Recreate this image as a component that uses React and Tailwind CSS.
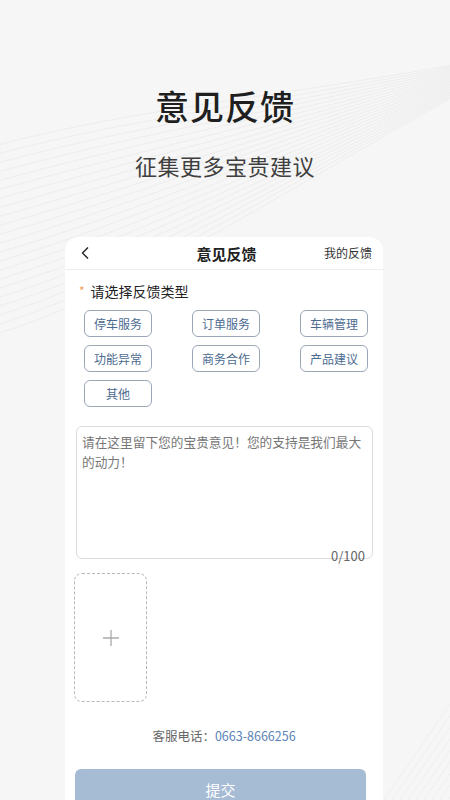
import React from "react";

const types = [
  "停车服务", "订单服务", "车辆管理",
  "功能异常", "商务合作", "产品建议",
  "其他",
];

function Waves() {
  const lines = [];
  for (let i = 0; i < 22; i++) {
    const y0 = 150 + i * 9;
    const y1 = 140 + i * 5;
    const y2 = 62 + i * 1.2;
    lines.push(
      <path
        key={"a" + i}
        d={`M-20 ${y0} C 120 ${y0 - 40}, 260 ${y1 - 40}, 470 ${y2}`}
        fill="none"
        stroke="#e6e6e6"
        strokeWidth="0.6"
      />
    );
  }
  const lines2 = [];
  for (let i = 0; i < 14; i++) {
    const x0 = 370 + i * 8;
    lines2.push(
      <path
        key={"b" + i}
        d={`M${x0} 820 L ${x0 + 90} 690`}
        fill="none"
        stroke="#ebebeb"
        strokeWidth="0.7"
      />
    );
  }
  return (
    <svg className="absolute inset-0" width="450" height="800" viewBox="0 0 450 800">
      {lines}
      {lines2}
    </svg>
  );
}

export default function App() {
  return (
    <div
      className="relative w-[450px] h-[800px] overflow-hidden bg-[#f6f6f6]"
      style={{ fontFamily: '"Noto Sans CJK SC", "Noto Sans", sans-serif' }}
    >
      <Waves />
      <div className="relative flex flex-col">
        <div className="pt-[86px] text-center text-[34px] leading-[40px] font-medium text-[#1f1f1f] tracking-[1px]">
          意见反馈
        </div>
        <div className="mt-[25px] text-center text-[22px] leading-[28px] text-[#3f3f3f] tracking-[0.5px]">
          征集更多宝贵建议
        </div>

        <div className="mt-[58px] ml-[65px] w-[318px] h-[600px] bg-white rounded-t-[14px] flex flex-col">
          <div className="h-[33px] border-b border-[#efefef] grid grid-cols-[1fr_auto_1fr] items-center">
            <div className="pl-[15px]">
              <svg width="10" height="14" viewBox="0 0 10 14">
                <path d="M8 1.5 L2.5 7 L8 12.5" fill="none" stroke="#222" strokeWidth="1.4" />
              </svg>
            </div>
            <div className="pl-[5px] text-[15px] font-bold text-[#222] leading-none">意见反馈</div>
            <div className="text-right pr-[11px] text-[12px] text-[#333] leading-none">我的反馈</div>
          </div>

          <div className="mt-[11px] pl-[14px] flex items-center text-[14px] leading-[20px] text-[#222]">
            <span className="text-[#f0a060] text-[12px] mr-[6px]">*</span>
            <span>请选择反馈类型</span>
          </div>

          <div className="mt-[9px] ml-[19px] grid grid-cols-[68px_68px_68px] gap-x-[40px] gap-y-[8px]">
            {types.map((t) => (
              <div
                key={t}
                className="h-[27px] rounded-[6px] border border-[#9aa7b8] flex items-center justify-center text-[12px] text-[#4d6b91]"
              >
                {t}
              </div>
            ))}
          </div>

          <div className="mt-[19px] ml-[11px] w-[297px] h-[133px] border border-[#dcdcdc] rounded-[6px] pl-[5px] pr-[3px] pt-[5px] flex flex-col">
            <div className="text-[12.7px] leading-[20px] text-[#777]">
              请在这里留下您的宝贵意见！您的支持是我们最大的动力！
            </div>
            <div className="mt-auto text-right text-[13px] leading-[16px] text-[#666] pr-[4px] translate-y-[6px]">
              0/100
            </div>
          </div>

          <div className="mt-[14px] ml-[9px] w-[73px] h-[129px] border border-dashed border-[#b8b8b8] rounded-[8px] flex items-center justify-center">
            <svg width="18" height="18" viewBox="0 0 18 18">
              <path d="M9 1 V17 M1 9 H17" stroke="#aaa" strokeWidth="1.3" />
            </svg>
          </div>

          <div className="mt-[25px] text-center text-[12.5px] leading-[18px]">
            <span className="text-[#666]">客服电话：</span>
            <span className="text-[#5a83b8]">0663-8666256</span>
          </div>

          <div className="mt-[24px] ml-[10px] w-[291px] h-[44px] rounded-[6px] bg-[#a6bbd4] flex items-start justify-center pt-[10px] text-[15px] text-white">
            提交
          </div>
        </div>
      </div>
    </div>
  );
}
